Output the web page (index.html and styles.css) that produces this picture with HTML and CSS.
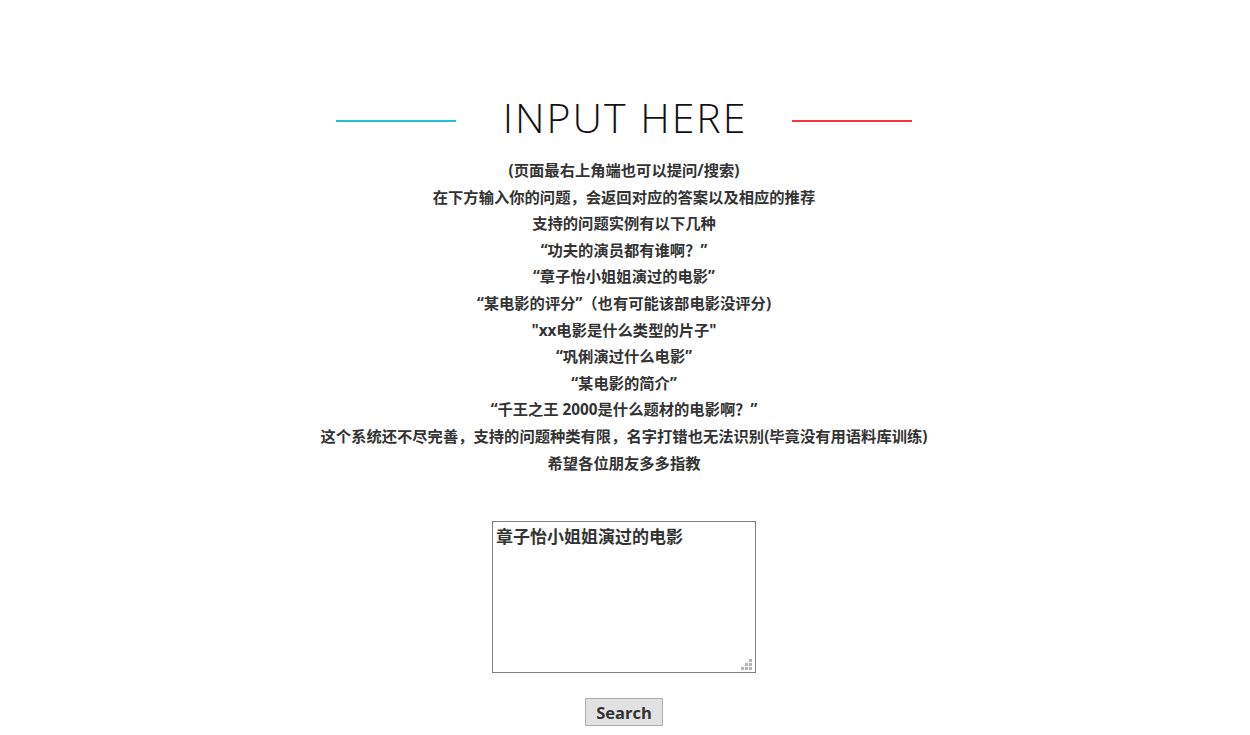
FILE: index.html
```html
<!DOCTYPE html>
<html lang="zh">
<head>
<meta charset="utf-8">
<title>Input Here</title>
<link rel="stylesheet" href="styles.css">
</head>
<body>
<main class="page">
  <header class="heading">
    <span class="rule rule-cyan"></span>
    <h1 class="title">INPUT HERE</h1>
    <span class="rule rule-red"></span>
  </header>
  <section class="intro">
    <p>(页面最右上角端也可以提问/搜索)</p>
    <p>在下方输入你的问题，会返回对应的答案以及相应的推荐</p>
    <p>支持的问题实例有以下几种</p>
    <p>“功夫的演员都有谁啊？”</p>
    <p>“章子怡小姐姐演过的电影”</p>
    <p>“某电影的评分”（也有可能该部电影没评分)</p>
    <p>"xx电影是什么类型的片子"</p>
    <p>“巩俐演过什么电影”</p>
    <p>“某电影的简介”</p>
    <p>“千王之王 2000是什么题材的电影啊？”</p>
    <p>这个系统还不尽完善，支持的问题种类有限，名字打错也无法识别(毕竟没有用语料库训练)</p>
    <p>希望各位朋友多多指教</p>
  </section>
  <form class="ask">
    <div class="field">
      <textarea class="question">章子怡小姐姐演过的电影</textarea>
      <svg class="grip" width="11" height="11" viewBox="0 0 11 11" aria-hidden="true">
        <rect x="8" y="0" width="3" height="3"/>
        <rect x="4" y="4" width="3" height="3"/>
        <rect x="8" y="4" width="3" height="3"/>
        <rect x="0" y="8" width="3" height="3"/>
        <rect x="4" y="8" width="3" height="3"/>
        <rect x="8" y="8" width="3" height="3"/>
      </svg>
    </div>
    <button type="button" class="search">Search</button>
  </form>
</main>
</body>
</html>
```
FILE: styles.css
```css
html, body {
  margin: 0;
  padding: 0;
  background: #fff;
}
body {
  font-family: "Open Sans", "Noto Sans CJK SC", sans-serif;
  color: #333;
  text-spacing-trim: space-all;
}
.page {
  display: flex;
  flex-direction: column;
  align-items: center;
  padding: 93px 2px 0 0;
}
.heading {
  display: flex;
  align-items: center;
  gap: 47px;
}
.rule {
  display: block;
  width: 120px;
  height: 2px;
  margin-top: 8px;
}
.rule-cyan { background: #1fc0cf; }
.rule-red { background: #f2383e; }
.title {
  margin: 0 -2px 0 0;
  font-family: "Open Sans", sans-serif;
  font-weight: 300;
  font-size: 41px;
  line-height: 48px;
  color: #111;
  letter-spacing: 2px;
}
.intro {
  margin-top: 16px;
  text-align: center;
}
.intro p {
  margin: 0;
  font-size: 15.3px;
  font-weight: 700;
  line-height: 26.6px;
}
.ask {
  display: flex;
  flex-direction: column;
  align-items: center;
  margin-top: 45px;
}
.field {
  position: relative;
  width: 264px;
  height: 152px;
}
.question {
  display: block;
  box-sizing: border-box;
  width: 264px;
  height: 152px;
  margin: 0;
  padding: 2px 3px;
  border: 1px solid #808080;
  font-family: "Open Sans", "Noto Sans CJK SC", sans-serif;
  font-weight: 700;
  font-size: 17px;
  line-height: 25px;
  color: #333;
  resize: none;
  outline: none;
}
.grip {
  position: absolute;
  right: 4px;
  bottom: 3px;
  fill: #b4b4b4;
}
.search {
  box-sizing: border-box;
  width: 78px;
  height: 28px;
  margin-top: 25px;
  padding: 0;
  background: #e1e1e1;
  border: 1px solid #adadad;
  border-radius: 0;
  font-family: "Open Sans", sans-serif;
  font-weight: 700;
  font-size: 16.5px;
  color: #333;
}
```
